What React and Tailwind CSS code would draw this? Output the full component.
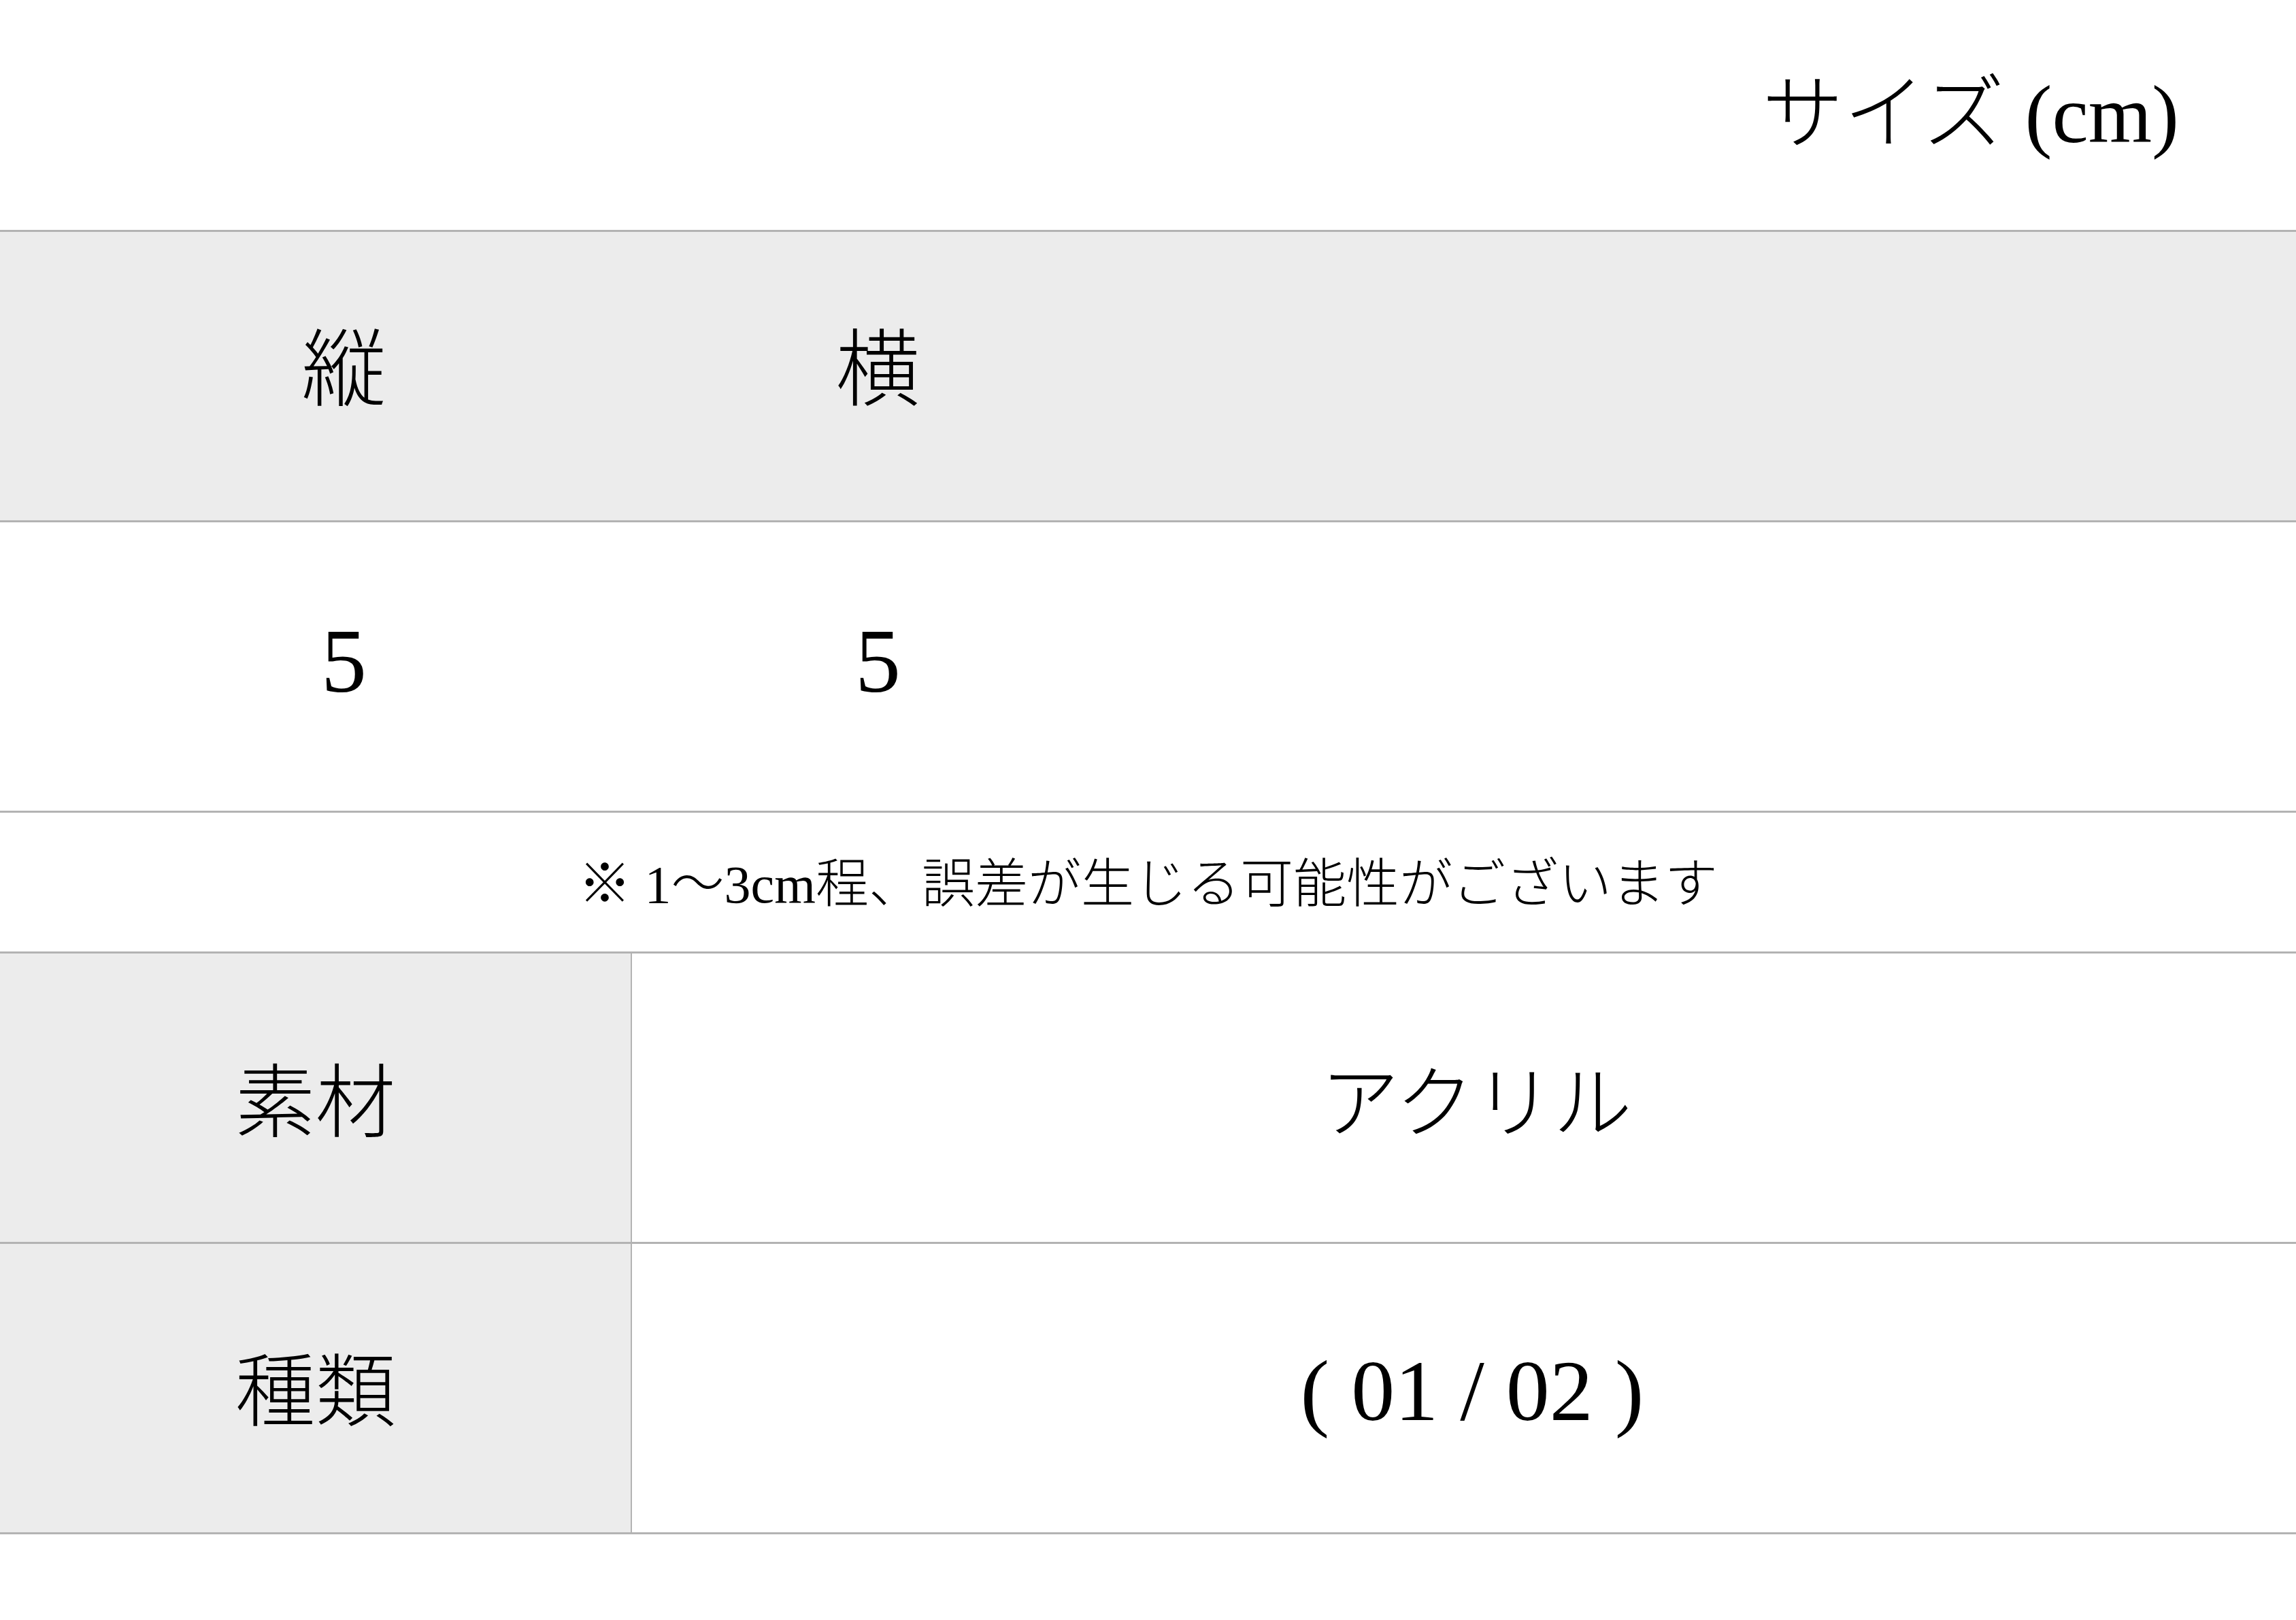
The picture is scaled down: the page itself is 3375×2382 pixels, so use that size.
import React from "react";

const F = { fontFamily: '"Liberation Serif", "Noto Sans CJK JP", serif' };

export default function App() {
  return (
    <div className="w-[3375px] h-[2382px] bg-white text-black overflow-hidden" style={F}>
      <div className="h-[338px] flex items-center justify-end pr-[172px]">
        <span className="text-[120px] leading-none font-light">サイズ (cm)</span>
      </div>
      <div className="border-t-[3px] border-[#b3b3b3]" />
      <div className="h-[424px] bg-[#ececec] flex items-center pl-[113px] pb-[14px]">
        <div className="w-[785px] text-center text-[124px] leading-none font-light">縦</div>
        <div className="w-[785px] text-center text-[124px] leading-none font-light">横</div>
      </div>
      <div className="border-t-[3px] border-[#b3b3b3]" />
      <div className="h-[424px] flex items-center pl-[113px] pb-[16px]">
        <div className="w-[785px] text-center text-[134px] leading-none">5</div>
        <div className="w-[785px] text-center text-[134px] leading-none">5</div>
      </div>
      <div className="border-t-[3px] border-[#b3b3b3]" />
      <div className="h-[204px] flex items-center justify-center pt-[8px]">
        <span className="text-[78px] leading-none font-light">※ 1〜3cm程、誤差が生じる可能性がございます</span>
      </div>
      <div className="border-t-[3px] border-[#b3b3b3]" />
      <div className="h-[424px] flex">
        <div className="w-[929px] bg-[#ececec] border-r-[2px] border-[#b3b3b3] flex items-center justify-center pt-[20px]">
          <span className="text-[118px] leading-none font-light">素材</span>
        </div>
        <div className="flex-1 flex items-center justify-center pl-[36px] pt-[20px]">
          <span className="text-[116px] leading-none font-light">アクリル</span>
        </div>
      </div>
      <div className="border-t-[3px] border-[#b3b3b3]" />
      <div className="h-[424px] flex">
        <div className="w-[929px] bg-[#ececec] border-r-[2px] border-[#b3b3b3] flex items-center justify-center pt-[16px]">
          <span className="text-[118px] leading-none font-light">種類</span>
        </div>
        <div className="flex-1 flex items-center justify-center pl-[24px] pt-[8px]">
          <span className="text-[128px] leading-none">( 01 / 02 )</span>
        </div>
      </div>
      <div className="border-t-[3px] border-[#b3b3b3]" />
    </div>
  );
}
